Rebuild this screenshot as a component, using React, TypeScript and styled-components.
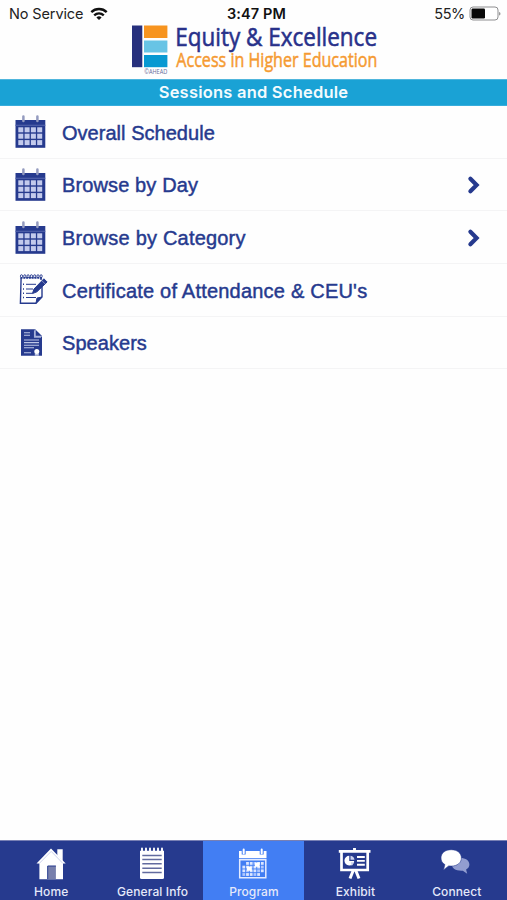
import React from "react";
import styled, { createGlobalStyle } from "styled-components";

const navy = "#263a8e";
const pale = "#c3caec";

const GlobalStyle = createGlobalStyle`
  * { box-sizing: border-box; }
  body { margin: 0; background: #fefefe; font-family: "Inter", "Liberation Sans", sans-serif; }
`;

const Screen = styled.div`
  display: flex;
  flex-direction: column;
  width: 507px;
  height: 900px;
  overflow: hidden;
  background: #fefefe;
`;

const StatusBar = styled.div`
  display: grid;
  grid-template-columns: 1fr auto 1fr;
  align-items: center;
  height: 24px;
  padding: 4px 6px 0 9px;
  font-size: 14.5px;
  line-height: 20px;
  color: #222;
`;

const Carrier = styled.div`
  display: flex;
  align-items: center;
  gap: 7px;
  letter-spacing: -0.12px;
`;

const Clock = styled.div`
  padding-left: 3px;
  font-weight: 600;
  font-size: 14.5px;
  letter-spacing: 0.1px;
  color: #111;
`;

const Power = styled.div`
  display: flex;
  align-items: center;
  justify-content: flex-end;
  gap: 3px;
  letter-spacing: -0.35px;
`;

const Brand = styled.header`
  display: flex;
  flex: none;
  height: 55px;
  padding-left: 130px;
`;

const LogoArt = styled.svg`
  overflow: visible;
`;

const TitleBar = styled.h1`
  flex: none;
  height: 27px;
  margin: 0;
  background: #1aa2d5;
  border-top: 1px solid #4fb6dd;
  border-bottom: 1px solid #38addc;
  color: #f3fbfe;
  font-size: 16.5px;
  font-weight: 600;
  line-height: 25px;
  letter-spacing: 0.22px;
  text-align: center;
`;

const Menu = styled.nav`
  flex: 1;
  font-family: "Liberation Sans", sans-serif;
`;

const MenuRow = styled.div`
  display: grid;
  grid-template-columns: 62px 1fr 40px;
  align-items: center;
  height: 52.65px;
  border-bottom: 1px solid #f4f4f5;
`;

const RowIcon = styled.span`
  display: flex;
  padding: 1px 0 0 14px;
`;

const RowLabel = styled.span<{ $spacing: number }>`
  padding-top: 2px;
  color: ${navy};
  font-size: 20px;
  line-height: 24px;
  letter-spacing: ${(p) => p.$spacing}px;
  -webkit-text-stroke: 0.45px ${navy};
  white-space: nowrap;
`;

const ChevronMark = styled.svg`
  margin-top: 2px;
`;

const TabBar = styled.nav`
  display: grid;
  grid-template-columns: repeat(5, 1fr);
  flex: none;
  height: 60px;
  border-top: 1px solid #7880b4;
`;

const Tab = styled.div<{ $active?: boolean }>`
  display: flex;
  flex-direction: column;
  align-items: center;
  padding-top: 4px;
  background: ${(p) => (p.$active ? "#427ef3" : navy)};
  color: #e5e9fa;
`;

const TabLabel = styled.span`
  margin-top: 3px;
  padding-left: 1px;
  font-size: 12px;
  font-weight: 500;
  line-height: 16px;
  letter-spacing: 0.1px;
`;

const Wifi = () => (
  <svg width="18" height="14" viewBox="0 0 18 14" fill="none" stroke="#111" strokeWidth="2.4">
    <path d="M1.3 5.2 C5.6 1 12.4 1 16.7 5.2" />
    <path d="M4.2 8.3 C7 5.8 11 5.8 13.8 8.3" />
    <path d="M9 13 L6.4 10.4 Q9 8.3 11.6 10.4Z" fill="#111" stroke="none" />
  </svg>
);

const Battery = () => (
  <svg width="33" height="16" viewBox="0 0 33 16">
    <rect x="2" y="1" width="28" height="13" rx="3" fill="#fff" stroke="#8e8e90" />
    <rect x="3.5" y="2.5" width="13.5" height="10" rx="1.2" fill="#080808" />
    <path d="M31 6 Q32.5 6.2 32.5 7.8 Q32.5 9.4 31 9.6Z" fill="#999" />
  </svg>
);

const Logo = () => (
  <LogoArt width="250" height="54" viewBox="130 24 250 54">
    <path d="M132 25.5h10.3v41.7H132z" fill="#27307d" />
    <path d="M144 25.5h23.4V38H144z" fill="#f7941f" />
    <path d="M144 40.5h23.4v12H144z" fill="#68c4e5" />
    <path d="M144 55h23.4v12.2H144z" fill="#0899d2" />
    <g fontFamily="Open Sans, sans-serif">
      <text x="144.3" y="74" fontSize="6.4" fill="#676c9b" textLength="23" lengthAdjust="spacingAndGlyphs">©AHEAD</text>
      <text x="175.3" y="45.7" fontSize="26.3" fill="#28318a" stroke="#28318a" strokeWidth=".6" textLength="201.7" lengthAdjust="spacingAndGlyphs">Equity &amp; Excellence</text>
      <text x="176.3" y="67.2" fontSize="19.5" fill="#f59a31" stroke="#f59a31" strokeWidth=".5" textLength="201" lengthAdjust="spacingAndGlyphs">Access in Higher Education</text>
    </g>
  </LogoArt>
);

const Calendar = () => (
  <svg width="33" height="34" viewBox="0 0 33 34">
    <path d="M1.5 5h29.8v27.8H1.5z" fill={navy} />
    <path d="M1.5 9.7h29.8v1.2H1.5z" fill="#5161ab" />
    {[12.3, 18.7, 25.1].map((y) =>
      [4.3, 10.6, 16.9, 23.2].map((x) => <rect key={`${x}-${y}`} x={x} y={y} width="5" height="5" fill={pale} />)
    )}
    <path d="M9.4 1.5v4.5M23.4 1.5v4.5" stroke="#949bbf" strokeWidth="2.5" strokeLinecap="round" />
  </svg>
);

const Certificate = () => (
  <svg width="34" height="34" viewBox="0 0 34 34" fill="none" stroke={navy}>
    <path d="M7.1 5 6.4 30.2H22L28 24V14M27 5v2" strokeWidth="1.4" />
    <path d="M6.5 4.8H28" strokeWidth="1.8" strokeDasharray="2 .8" />
    {[7.5, 10.8, 14.1, 17.4, 20.7, 24, 27.1].map((x) => (
      <ellipse key={x} cx={x} cy="3.2" rx="1.1" ry="1.5" strokeWidth=".9" />
    ))}
    <path d="M12 11.3h10M12 16h7M12 20.3h6M12 24.5h10" strokeWidth="1" />
    <path d="M9 11.3h1M9 16h1M9 20.3h1M9 24.5h1" strokeWidth="1.4" />
    <path d="M22 30.2 23 25 28 24" fill={navy} strokeWidth="1" />
    <path d="m18.4 20.6 1.6-4.6L29.9 5.8l3.2 3.2-10.2 9.8Z" fill={navy} strokeWidth="1" />
    <path d="m27.8 7.6 3.5 3.5" stroke="#aab4dc" strokeWidth=".7" />
  </svg>
);

const Document = () => (
  <svg width="34" height="30" viewBox="0 0 34 30">
    <path d="M7 1.2h14.2L28 8v19.8H7z" fill={navy} />
    <path d="M21.2 1.5v6.8H28M20.5 2.5v6.6H27" fill="none" stroke="#aab4db" strokeWidth="1.1" />
    <path d="M10 4.8h6M10 7.3h6M10 12h15M10 14.6h15M10 17.2h15M10 19.8h10M10 24.8h7" stroke="#bdc6e6" strokeWidth="1.1" />
    <path d="M20.8 25.4h4v2.3h-4z" fill="#bdc6e6" />
    <circle cx="22.8" cy="23.4" r="2.5" fill="#fff" />
  </svg>
);

const Chevron = () => (
  <ChevronMark width="14" height="20" viewBox="0 0 14 20">
    <path d="m3.4 3.8 6.2 6.2-6.2 6.2" fill="none" stroke={navy} strokeWidth="4.2" strokeLinecap="round" />
  </ChevronMark>
);

const HomeIcon = () => (
  <svg width="36" height="36" viewBox="0 0 36 36">
    <path d="M3.5 18.5 18 3.5 32.7 18.5H30V34.2H6.4V18.5Z" fill="#fff" />
    <path d="M24.3 4.2h5.4v12l-5.4-5.5z" fill="#fff" />
    <path d="m6.3 18.4 11.9-12 11.7 12" fill="none" stroke="#b7bfe2" strokeWidth=".7" />
    <path d="M14.7 21h8.2v13.2h-8.2z" fill="#777fac" />
    <path d="M14.7 34V21h8.2" stroke={navy} fill="none" />
  </svg>
);

const Notepad = () => (
  <svg width="36" height="36" viewBox="0 0 36 36">
    <path d="M6 5.8h24v26.6q0 1.5-1.5 1.5h-21q-1.5 0-1.5-1.5z" fill="#fff" />
    <path d="M8 3.4v4M12 3.4v4M16 3.4v4M20 3.4v4M24 3.4v4M28 3.4v4" stroke="#fff" strokeWidth="1.9" strokeLinecap="round" />
    <path d="M8.3 10.4h19.4M8.3 14.6h19.4M8.3 18.8h19.4M8.3 23.3h19.4M8.3 27.5h19.4" stroke="#626b9f" strokeWidth="1.5" />
  </svg>
);

const Program = () => (
  <svg width="36" height="36" viewBox="0 0 36 36">
    <path d="M4 6h27.5v7.2H4z" fill="#fff" />
    <path d="M8.7 4v5.5M26.7 4v5.5" stroke="#427ef3" strokeWidth="4" />
    <path d="M8.7 4.5v3.7M26.7 4.5v3.7" stroke="#fff" strokeWidth="2" strokeLinecap="round" />
    <path d="M4.7 14.7h26.1v18.1H4.7z" fill="none" stroke="#e4ebff" strokeWidth="1.5" />
    {[17, 20.7, 24.4, 28.1].map((y, r) =>
      [7.4, 11.1, 14.8, 18.5, 22.2, 25.9].map((x, c) => (r === 0 && c === 0) || (r === 3 && c > 4) ? null : (
        <rect key={`${x}-${y}`} x={x} y={y} width="2.8" height="2.8" fill={(r + c) % 3 ? "#dce6ff" : "#afc7ff"} />
      ))
    )}
    <path d="M12 21.5h4.8v4.3H12zM20 17.5h4.6v4.3H20z" fill="#fff" />
  </svg>
);

const Exhibit = () => (
  <svg width="36" height="36" viewBox="0 0 36 36" fill="none" stroke="#fff">
    <path d="M17.5 3v3M1.8 6.4h31.7" strokeWidth="2.9" />
    <path d="M4.5 7v18h26.2V7" strokeWidth="2.7" />
    <path d="M16.2 25.5 13 33.5M18.8 25.5l3.2 8" strokeWidth="3" />
    <path d="M12.3 10.8a4.9 4.9 0 1 0 4.9 5.2h-4.9z" fill="#fff" stroke="none" />
    <path d="M13.5 10.8a4.6 4.6 0 0 1 4 4h-4zM13.8 17.3h3.4l-2.4 3.7z" fill="#cbd2ee" stroke="none" />
    <path d="M20 12h7.8M20 15.9h7.8M20 19.8h7.8" strokeWidth="1.9" />
  </svg>
);

const Connect = () => (
  <svg width="36" height="36" viewBox="0 0 36 36">
    <path d="M22 13c6 0 9.4 2.7 9.4 6.5 0 2.3-1.2 4-3.3 5l1.1 4.3-4.4-3.1c-6.7.5-11-2.3-11-6.1S16.7 13 22 13Z" fill="#929dd0" />
    <path d="M13.2 4.7c6 0 10.2 3.4 10.2 8.2s-4.2 8.2-10.2 8.2l-2.5-.2-5.2 4 1.4-5.3C4.2 18 3 15.7 3 12.9c0-4.8 4.2-8.2 10.2-8.2Z" fill="#fff" stroke={navy} strokeWidth=".6" />
  </svg>
);

const rows = [
  { label: "Overall Schedule", icon: <Calendar />, spacing: 0.03 },
  { label: "Browse by Day", icon: <Calendar />, spacing: 0.12, more: true },
  { label: "Browse by Category", icon: <Calendar />, spacing: 0.2, more: true },
  { label: "Certificate of Attendance & CEU's", icon: <Certificate />, spacing: 0.21 },
  { label: "Speakers", icon: <Document />, spacing: 0.05 },
];

const tabs = [
  { label: "Home", icon: <HomeIcon /> },
  { label: "General Info", icon: <Notepad /> },
  { label: "Program", icon: <Program />, active: true },
  { label: "Exhibit", icon: <Exhibit /> },
  { label: "Connect", icon: <Connect /> },
];

export default function App() {
  return (
    <>
      <GlobalStyle />
      <Screen>
        <StatusBar>
          <Carrier>No Service <Wifi /></Carrier>
          <Clock>3:47 PM</Clock>
          <Power>55% <Battery /></Power>
        </StatusBar>
        <Brand><Logo /></Brand>
        <TitleBar>Sessions and Schedule</TitleBar>
        <Menu>
          {rows.map((r) => (
            <MenuRow key={r.label}>
              <RowIcon>{r.icon}</RowIcon>
              <RowLabel $spacing={r.spacing}>{r.label}</RowLabel>
              {r.more && <Chevron />}
            </MenuRow>
          ))}
        </Menu>
        <TabBar>
          {tabs.map((t) => (
            <Tab key={t.label} $active={t.active}>
              {t.icon}
              <TabLabel>{t.label}</TabLabel>
            </Tab>
          ))}
        </TabBar>
      </Screen>
    </>
  );
}
